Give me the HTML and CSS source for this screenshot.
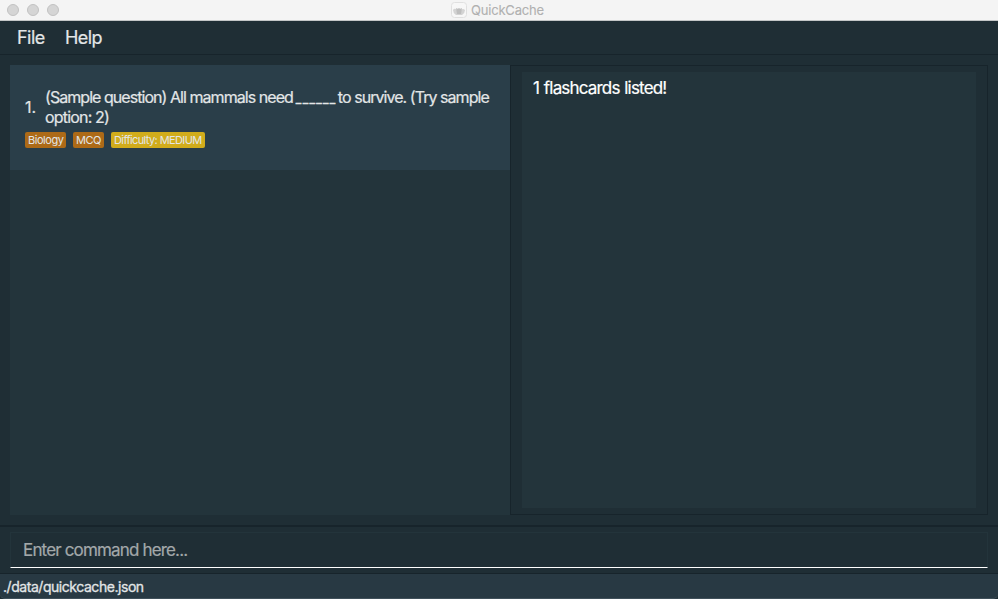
FILE: index.html
```html
<!DOCTYPE html>
<html lang="en">
<head>
<meta charset="utf-8">
<title>QuickCache</title>
<link rel="stylesheet" href="styles.css">
</head>
<body>
<div class="window">
  <header class="titlebar">
    <div class="lights"><i></i><i></i><i></i></div>
    <svg class="app-icon" width="16" height="16" viewBox="0 0 16 16">
      <rect x=".5" y=".5" width="15" height="15" rx="3" fill="#f7f7f7" stroke="#e0e0e0"/>
      <path d="M2 8Q3 6 5 7L6 8L7 6L8 7L9 6L10 8Q12 6 14 8Q14 11 11 13H5Q2 11 2 8Z" fill="#d3d3d3"/>
      <path d="M5 6L7 7L8 6L9 7L11 6L10 12H6Z" fill="#bebebe"/>
    </svg>
    <span class="title">QuickCache</span>
  </header>
  <nav class="menu"><span class="file">File</span><span>Help</span></nav>
  <main class="content">
    <section class="list">
      <article class="card">
        <div class="question">
          <span class="index">1.</span>
          <p><span class="before">(Sample question) All mammals need</span><span class="blank">______</span><span class="after">to survive. (Try sample</span><br><span class="option">option: 2)</span></p>
        </div>
        <div class="tags">
          <span class="tag biology">Biology</span>
          <span class="tag mcq">MCQ</span>
          <span class="tag medium">Difficulty: MEDIUM</span>
        </div>
      </article>
    </section>
    <section class="result"><div class="output"><span>1 flashcards listed!</span></div></section>
  </main>
  <section class="command"><div class="field"><span>Enter command here...</span></div></section>
  <footer class="status"><span>./data/quickcache.json</span></footer>
</div>
</body>
</html>
```
FILE: styles.css
```css
* { box-sizing: border-box; }
body { margin: 0; background: #1f2e35; font-family: Inter, "Liberation Sans", sans-serif; color: #e3e6e7; }
.window { display: flex; flex-direction: column; width: 998px; height: 599px; overflow: hidden; white-space: nowrap; }
.titlebar { display: flex; align-items: center; height: 21px; background: #f4f4f4; border-bottom: 1px solid #c4c6c7; }
.lights { display: flex; gap: 8px; width: 451px; padding-left: 7px; }
.lights i { width: 12px; height: 12px; border-radius: 50%; background: #d5d5d5; border: 1px solid #c2c2c2; }
.title { margin-left: 4px; font-size: 13px; line-height: 20px; letter-spacing: -.2px; color: #b0b0b0; -webkit-text-stroke: .1px; }
.menu { display: flex; height: 34px; padding-left: 17px; border-bottom: 1px solid #17242b; font-size: 18px; line-height: 33px; letter-spacing: -.55px; -webkit-text-stroke: .2px; }
.file { width: 48px; }
.content { display: flex; height: 470px; padding: 10px; }
.list { width: 500px; background: #23343b; }
.card { height: 105px; padding: 22px 15px 0; background: #2a3e49; }
.question { display: flex; align-items: center; height: 40px; font-size: 16px; line-height: 20px; -webkit-text-stroke: .2px; }
.index { flex: 0 0 20px; letter-spacing: .1px; }
.question p { margin: 0; letter-spacing: -.95px; }
.question .option { letter-spacing: -.82px; }
.blank { display: inline-block; width: 42px; margin-left: 3px; font-size: 12px; line-height: 14px; letter-spacing: 1.3px; -webkit-text-stroke: .4px; }
.tags { display: flex; gap: 7px; margin-top: 5px; }
.tag { height: 16px; padding-left: 3px; border-radius: 2px; font-size: 11px; line-height: 16px; letter-spacing: -.45px; background: #ad6a17; }
.biology { width: 41px; }
.mcq { width: 31px; }
.medium { width: 94px; background: #d1ac1b; letter-spacing: -.6px; }
.result { width: 478px; padding: 6px 11px; border: 1px solid #17242b; }
.output { height: 436px; padding-left: 11px; background: #23343b; font-size: 17px; line-height: 33px; letter-spacing: -.82px; word-spacing: .8px; color: #fff; -webkit-text-stroke: .2px; }
.command { height: 48px; padding: 5px 10px; border-top: 2px solid #17242b; }
.field { height: 36px; padding-left: 12px; border: 1px solid #23343b; border-bottom-color: #fff; font-size: 17px; line-height: 34px; letter-spacing: -.84px; color: #a3a8aa; -webkit-text-stroke: .2px; }
.status { height: 26px; padding-left: 3px; background: #283943; border-top: 1px solid #17242b; border-bottom: 1px solid #40505a; border-radius: 0 0 5px 5px; font-size: 14px; line-height: 26px; letter-spacing: -.45px; -webkit-text-stroke: .3px; }
```
